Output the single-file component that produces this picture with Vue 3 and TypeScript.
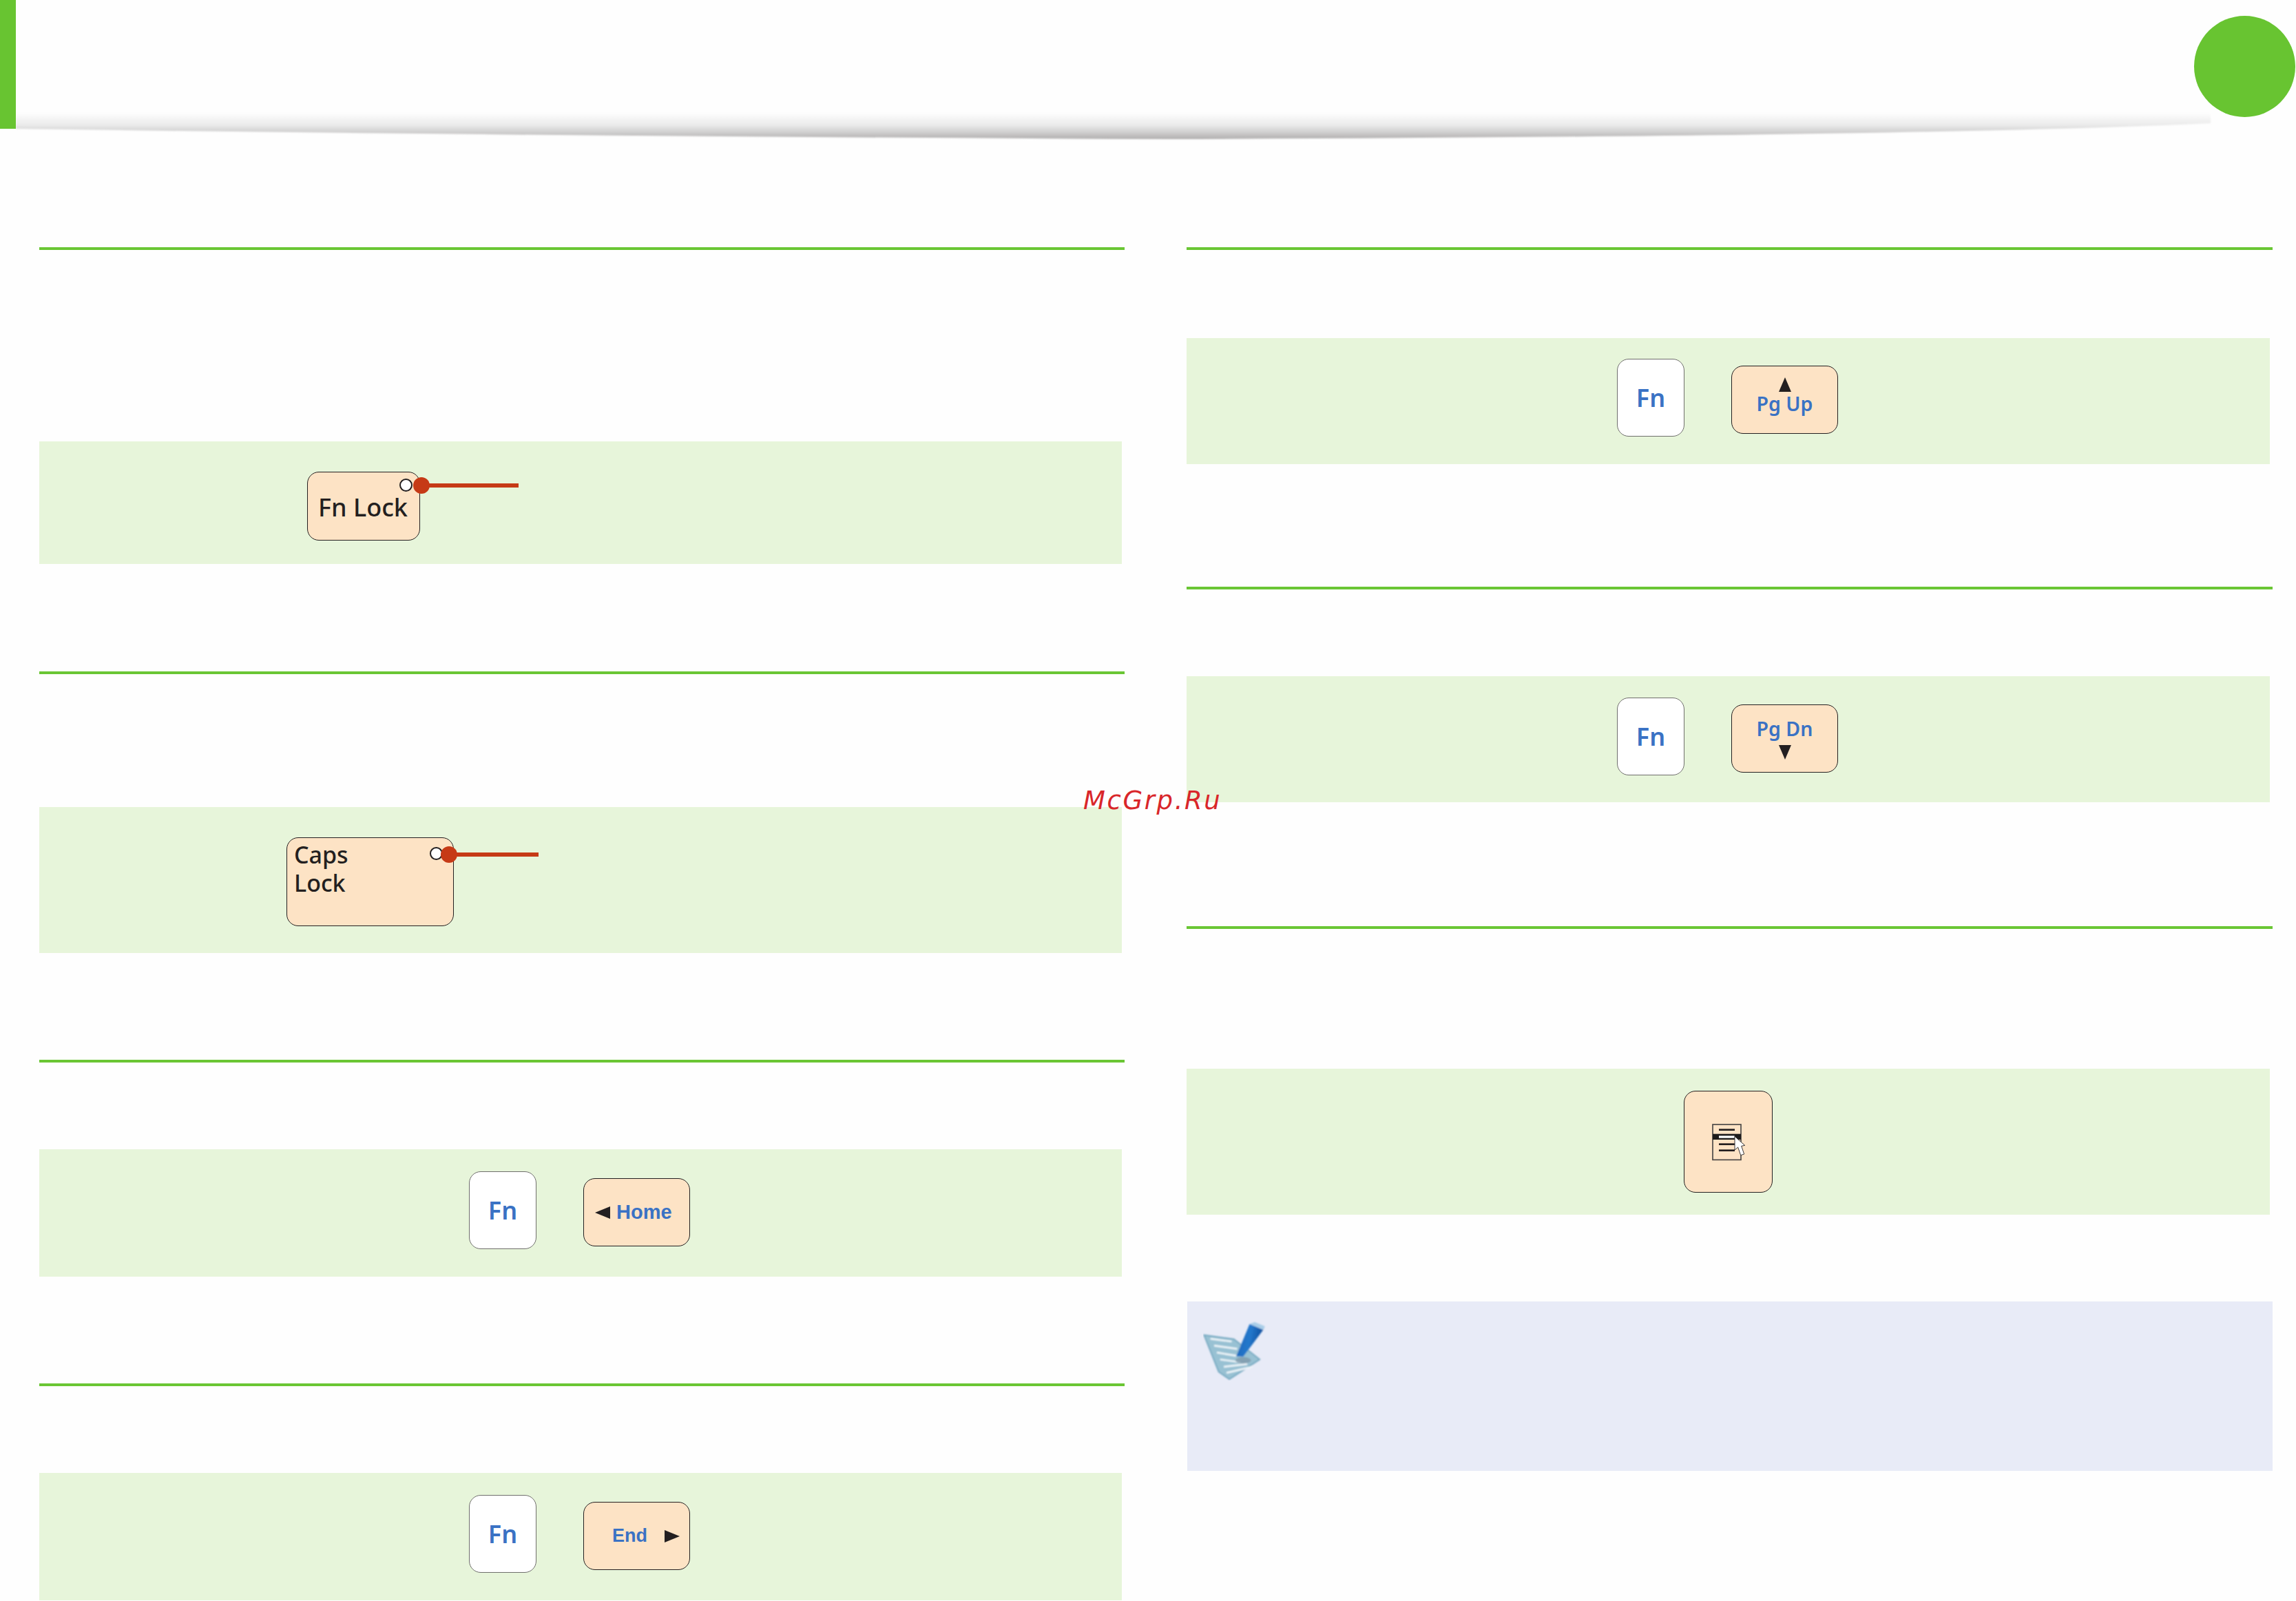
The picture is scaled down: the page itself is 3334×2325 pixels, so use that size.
<script setup lang="ts">
const noteSheetLines: number[][] = [
  [170, 196, 262, 208],
  [186, 226, 286, 240],
  [198, 256, 282, 270],
  [212, 286, 300, 298],
  [228, 318, 330, 306],
  [240, 344, 352, 318],
]
</script>

<template>
  <div class="page">
    <header class="header">
      <div class="side-bar"></div>
      <div class="chapter-dot"></div>
      <svg class="header-shadow" width="3334" height="60" viewBox="0 160 3334 60">
        <defs>
          <linearGradient id="shade" gradientUnits="userSpaceOnUse" x1="0" y1="164" x2="0" y2="202">
            <stop offset="0" stop-color="#fefefe" />
            <stop offset="0.45" stop-color="#ebebeb" />
            <stop offset="0.75" stop-color="#cfcece" />
            <stop offset="1" stop-color="#b0aeae" />
          </linearGradient>
          <filter id="shade-soft" x="-1%" y="-20%" width="102%" height="140%">
            <feGaussianBlur stdDeviation="1" />
          </filter>
        </defs>
        <path d="M23 164 L3210 164 L3210 179 Q2800 198 1700 202 Q800 198 23 187 Z" fill="url(#shade)" filter="url(#shade-soft)" />
      </svg>
    </header>

    <main class="columns">
      <div class="column column-left">
        <section class="block l1">
          <div class="panel lock-fn">
            <div class="key key-fnlock">
              <span class="key-label">Fn Lock</span>
              <i class="led"></i>
              <i class="lead"></i>
              <i class="lead-dot"></i>
            </div>
          </div>
        </section>

        <section class="block l2">
          <div class="panel lock-caps">
            <div class="key key-caps">
              <span class="key-label">Caps<br />Lock</span>
              <i class="led"></i>
              <i class="lead"></i>
              <i class="lead-dot"></i>
            </div>
          </div>
        </section>

        <section class="block l3">
          <div class="panel combo combo-left">
            <div class="key key-fn">Fn</div>
            <div class="key key-wide key-home">
              <svg class="tri-h" width="22" height="18" viewBox="0 0 22 18"><polygon points="0,9 22,0 22,18" /></svg>
              <span>Home</span>
            </div>
          </div>
        </section>

        <section class="block l4">
          <div class="panel combo combo-left">
            <div class="key key-fn">Fn</div>
            <div class="key key-wide key-end">
              <span>End</span>
              <svg class="tri-h" width="22" height="18" viewBox="0 0 22 18"><polygon points="22,9 0,0 0,18" /></svg>
            </div>
          </div>
        </section>
      </div>

      <div class="column column-right">
        <section class="block r1">
          <div class="panel combo combo-right">
            <div class="key key-fn">Fn</div>
            <div class="key key-wide key-page key-page-up">
              <svg class="tri-v" width="18" height="21" viewBox="0 0 18 21"><polygon points="9,0 18,21 0,21" /></svg>
              <span>Pg Up</span>
            </div>
          </div>
        </section>

        <section class="block r2">
          <div class="panel combo combo-right">
            <div class="key key-fn">Fn</div>
            <div class="key key-wide key-page key-page-down">
              <span>Pg Dn</span>
              <svg class="tri-v" width="18" height="21" viewBox="0 0 18 21"><polygon points="9,21 18,0 0,0" /></svg>
            </div>
          </div>
        </section>

        <section class="block r3">
          <div class="panel panel-menu">
            <div class="key key-menu">
              <svg width="50" height="55" viewBox="195 185 150 165">
                <rect x="201" y="191" width="123" height="154" fill="none" stroke="#4a4746" stroke-width="5" />
                <rect x="201" y="232" width="123" height="25" fill="#1d1b1b" />
                <rect x="228" y="240" width="68" height="10" fill="#ffffff" />
                <rect x="228" y="210" width="69" height="8" fill="#231f20" />
                <rect x="228" y="273" width="69" height="8" fill="#231f20" />
                <rect x="228" y="300" width="69" height="8" fill="#231f20" />
                <polygon points="297,243 297,302 311,290 323,325 338,320 326,285 341,282" fill="#ffffff" stroke="#3a3737" stroke-width="3" stroke-linejoin="round" />
              </svg>
            </div>
          </div>
        </section>

        <aside class="note">
          <svg class="note-icon" width="91" height="87" viewBox="138 118 272 260">
            <defs>
              <linearGradient id="pencil" x1="0" y1="0" x2="1" y2="0.2">
                <stop offset="0" stop-color="#1a63b8" />
                <stop offset="0.55" stop-color="#2478cc" />
                <stop offset="1" stop-color="#0f4f9e" />
              </linearGradient>
              <filter id="soft" x="-5%" y="-5%" width="110%" height="110%">
                <feGaussianBlur stdDeviation="3.5" />
              </filter>
            </defs>
            <g filter="url(#soft)">
              <polygon points="142,180 272,198 384,286 252,372 206,340" fill="#98c1d3" stroke="#77aac2" stroke-width="6" stroke-linejoin="round" />
              <line
                v-for="(l, i) in noteSheetLines"
                :key="i"
                :x1="l[0]"
                :y1="l[1]"
                :x2="l[2]"
                :y2="l[3]"
                stroke="#eef5f9"
                stroke-width="8"
              />
              <polygon points="282,272 340,132 400,156 312,274" fill="url(#pencil)" />
              <polygon points="340,132 362,124 406,142 400,158" fill="#a8cde8" />
              <ellipse cx="312" cy="290" rx="34" ry="14" fill="#7f99aa" opacity="0.8" />
            </g>
          </svg>
        </aside>
      </div>
    </main>

    <div class="watermark">McGrp.Ru</div>
  </div>
</template>

<style scoped>
.page {
  position: relative;
  width: 3334px;
  height: 2325px;
  overflow: hidden;
  background: #fefefe;
  font-family: "Noto Sans", "Liberation Sans", sans-serif;
  color: #231f20;
}

.header {
  position: relative;
  display: flex;
  justify-content: space-between;
  align-items: flex-start;
  height: 200px;
}
.side-bar {
  position: relative;
  z-index: 1;
  width: 23px;
  height: 187px;
  background: #68c431;
}
.chapter-dot {
  width: 147px;
  height: 147px;
  margin-top: 23px;
  margin-right: 1px;
  border-radius: 50%;
  background: #68c431;
}
.header-shadow {
  position: absolute;
  left: 0;
  top: 160px;
}

.columns {
  display: flex;
  gap: 90px;
  padding: 159px 0 0 57px;
}
.column-left {
  width: 1576px;
}
.column-right {
  width: 1577px;
}

.block {
  border-top: 4px solid #6ac634;
  padding-right: 4px;
}
.l1 { margin-bottom: 156px; }
.l2 { margin-bottom: 155px; }
.l3 { margin-bottom: 155px; }
.r1 { margin-bottom: 178px; }
.r2 { margin-bottom: 180px; }
.r3 { margin-bottom: 126px; }

.panel {
  box-sizing: border-box;
  display: flex;
  align-items: flex-start;
  background: #e7f5da;
}
.l1 .panel { margin-top: 278px; height: 178px; }
.l2 .panel { margin-top: 193px; height: 212px; }
.l3 .panel { margin-top: 126px; height: 185px; padding-top: 32px; }
.l4 .panel { margin-top: 126px; height: 185px; padding-top: 32px; }
.r1 .panel { margin-top: 128px; height: 183px; padding-top: 30px; }
.r2 .panel { margin-top: 126px; height: 183px; padding-top: 31px; }
.r3 .panel { margin-top: 203px; height: 212px; }

.lock-fn { padding: 44px 0 0 389px; }
.lock-caps { padding: 44px 0 0 359px; }

.combo {
  gap: 68px;
}
.combo-left { padding-left: 624px; }
.combo-right { padding-left: 625px; }

.panel-menu {
  padding: 32px 0 0 722px;
}

.key {
  position: relative;
  flex: none;
  box-sizing: border-box;
  background: #fde3c5;
  border: 1.5px solid #231f20;
  border-radius: 17px;
}

.key-fn {
  display: flex;
  align-items: center;
  justify-content: center;
  width: 98px;
  height: 113px;
  background: #ffffff;
  border-color: #6f6e6c;
  color: #3a72c4;
  font-size: 36px;
  font-weight: 600;
  line-height: 1;
}

.key-wide {
  display: flex;
  align-items: center;
  width: 155px;
  height: 99px;
  margin-top: 10px;
  color: #3a72c4;
}

.key-home,
.key-end {
  font-family: "Liberation Sans", Arial, sans-serif;
  font-weight: 700;
}
.key-home {
  gap: 9px;
  padding-left: 16px;
  font-size: 29px;
}
.key-end {
  gap: 25px;
  padding-left: 41px;
  font-size: 27px;
}

.key-page {
  flex-direction: column;
  justify-content: flex-start;
  font-size: 28.5px;
  font-weight: 600;
  line-height: 32px;
}
.key-page-up {
  padding-top: 16px;
  gap: 1px;
}
.key-page-down {
  padding-top: 18px;
  gap: 8px;
}

.tri-h,
.tri-v {
  flex: none;
  fill: #231f20;
}

.key-fnlock {
  width: 164px;
  height: 100px;
  padding: 33px 0 0 15px;
  font-size: 36px;
  font-weight: 500;
  line-height: 36px;
  white-space: nowrap;
}
.key-caps {
  width: 243px;
  height: 129px;
  padding: 4px 0 0 10px;
  font-size: 34px;
  font-weight: 500;
  line-height: 41px;
}

.led,
.lead,
.lead-dot {
  position: absolute;
  display: block;
}
.led {
  box-sizing: border-box;
  width: 19px;
  height: 19px;
  border: 2px solid #231f20;
  border-radius: 50%;
  background: #ffffff;
}
.lead {
  height: 6px;
  background: #c63a16;
}
.lead-dot {
  width: 24px;
  height: 24px;
  border-radius: 50%;
  background: #c63a16;
}

.key-fnlock .led { left: 133px; top: 9px; }
.key-fnlock .lead { left: 164px; top: 16px; width: 142px; }
.key-fnlock .lead-dot { left: 153px; top: 7px; }

.key-caps .led { left: 207px; top: 13px; }
.key-caps .lead { left: 235px; top: 21px; width: 130px; }
.key-caps .lead-dot { left: 223px; top: 12px; }

.key-menu {
  display: flex;
  align-items: center;
  justify-content: center;
  width: 129px;
  height: 148px;
}

.note {
  box-sizing: border-box;
  height: 246px;
  margin-left: 1px;
  padding: 28px 0 0 23px;
  background: #e8ebf7;
}
.note-icon {
  display: block;
}

.watermark {
  position: absolute;
  left: 1573px;
  top: 1141px;
  font-family: "DejaVu Sans", sans-serif;
  font-size: 37px;
  font-style: italic;
  letter-spacing: 2.6px;
  line-height: 44px;
  color: #d9262a;
}
</style>

<style>
html,
body {
  margin: 0;
  background: #fefefe;
}
</style>
